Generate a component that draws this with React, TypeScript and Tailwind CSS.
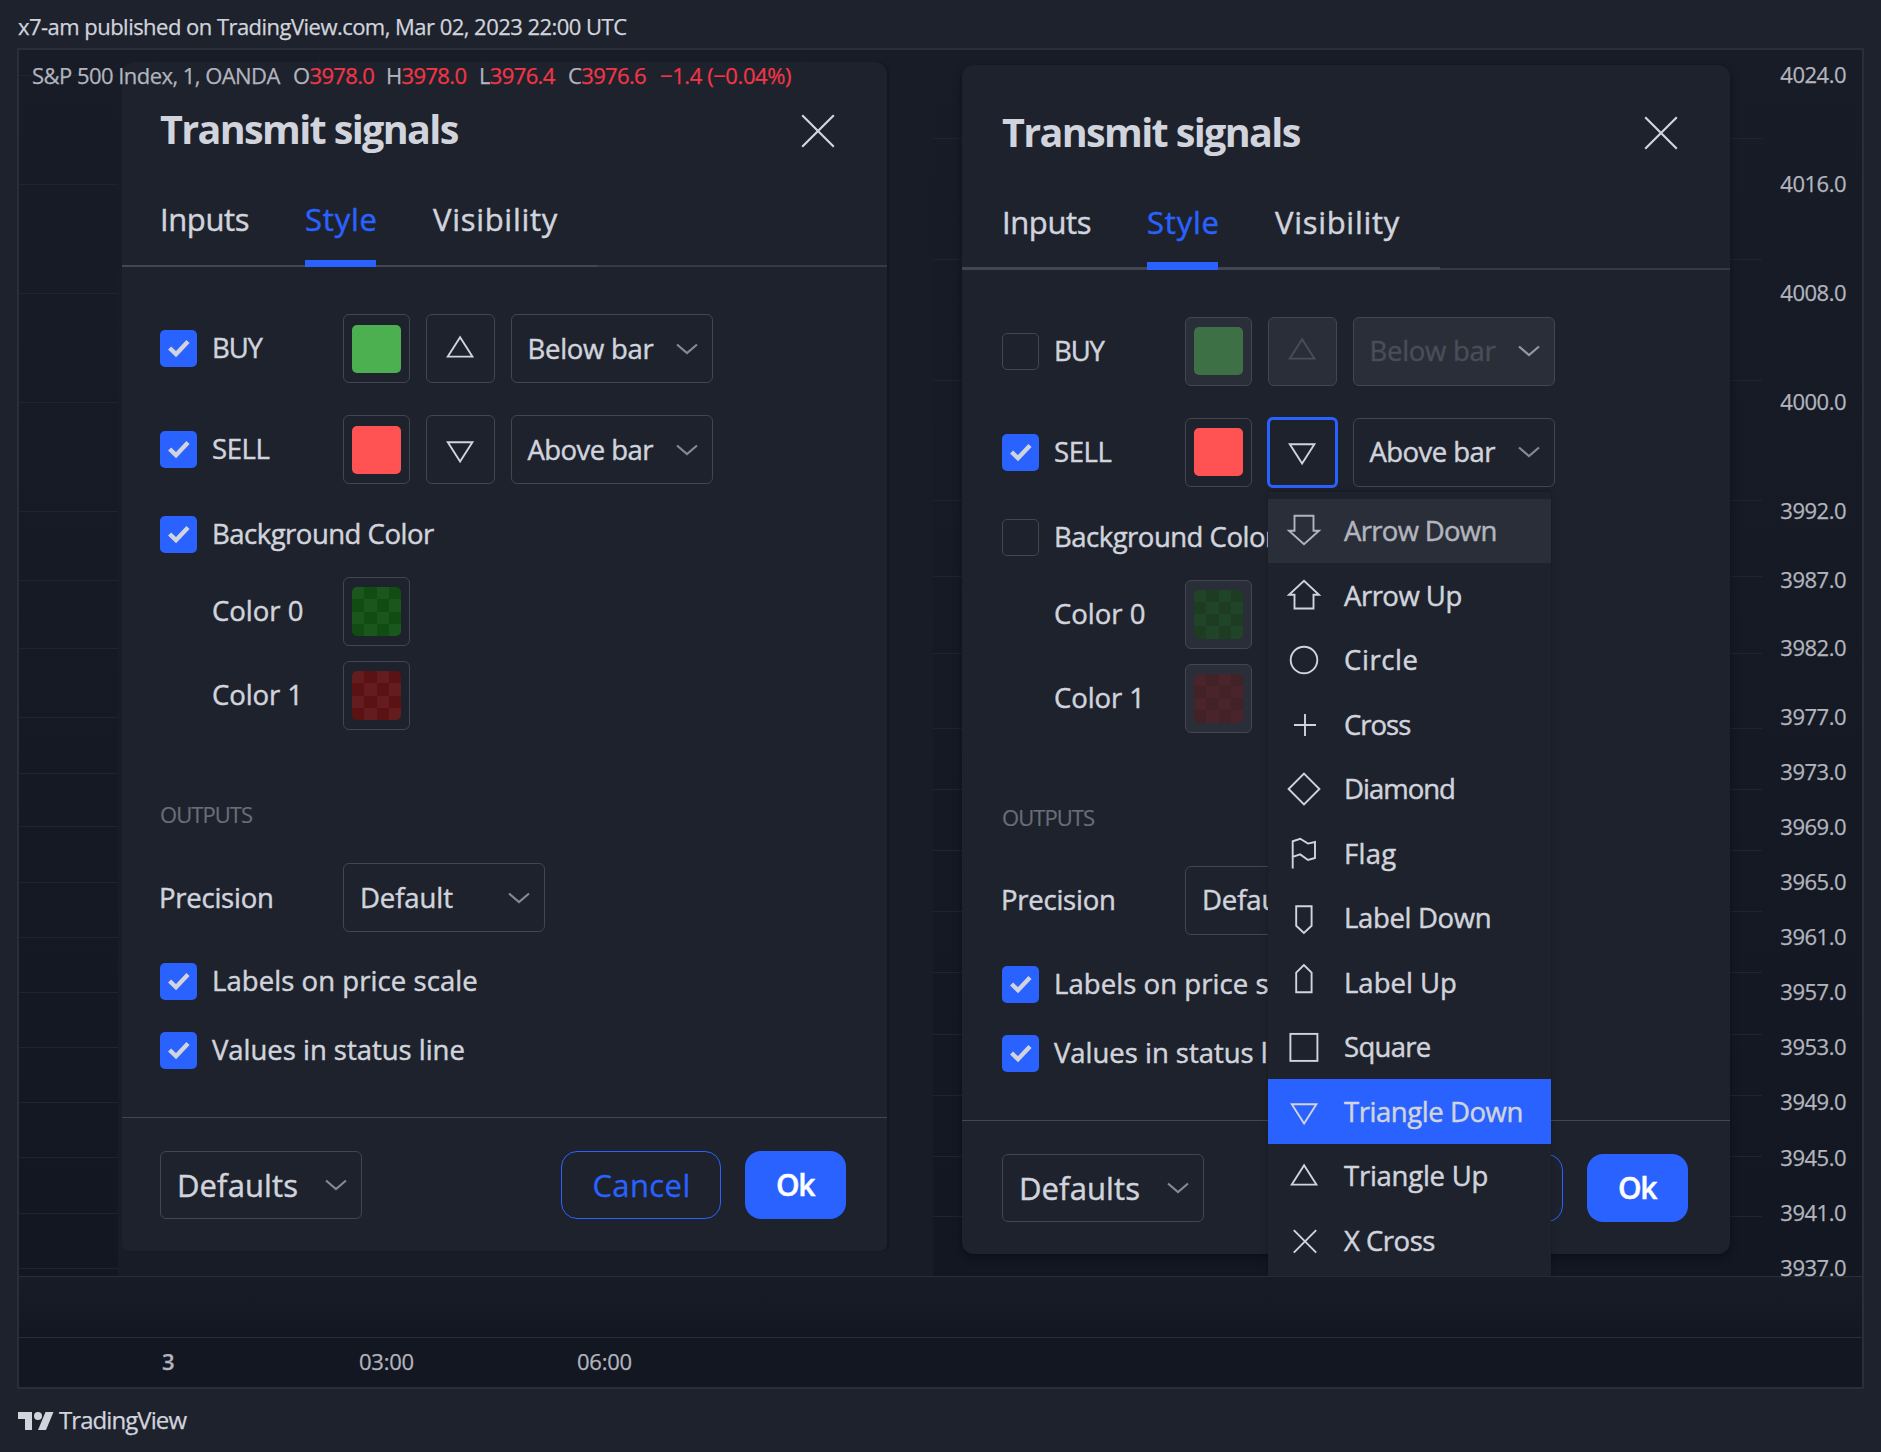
import type { ReactNode } from "react";

const SHAPES: Record<string, ReactNode> = {
  arrowDown: <path d="M8.5 2.8h19v15h5.5L18 31.2 3 17.8h5.5z" />,
  arrowUp: <path d="M8.5 31.5h19V17.8h5.5L18 3.8 3 17.8h5.5z" />,
  circle: <circle cx="18" cy="18" r="13.3" />,
  cross: <path d="M8 19h22M19 8v22" />,
  diamond: <path d="M18 2.6 33.4 18 18 33.4 2.6 18z" />,
  flag: <path d="M6.7 33.6V6.3L14.2 3.8 22 8.6l7-1.6v16L22 25l-7.8-5.6-7.5 2.4" />,
  labelDown: <path d="M10.2 6.2h15.4v19.6l-7.7 7.2-7.7-7.2z" />,
  labelUp: <path d="M10.2 28.3h15.4V8.6L17.9 1l-7.7 7.6z" />,
  square: <rect x="4.4" y="4.9" width="27" height="27" />,
  triangleDown: <path d="M5.8 11.2h24.6L18.1 30.6z" />,
  triangleUp: <path d="M5.8 26.6h24.6L18.1 7.2z" />,
  xCross: <path d="m7.8 8.2 22.4 22.4M30.2 8.2 7.8 30.6" />,
};

function ShapeIcon({ name, className = "" }: { name: string; className?: string }) {
  return (
    <svg
      viewBox="0 0 36 36"
      className={`h-9 w-9 shrink-0 fill-none stroke-current stroke-[1.9] ${className}`}
    >
      {SHAPES[name]}
    </svg>
  );
}

function Chevron({ className }: { className: string }) {
  return (
    <svg viewBox="0 0 22 12" className={`h-3 w-[22px] shrink-0 fill-none stroke-current stroke-[2.2] ${className}`}>
      <path d="m1 1.5 10 8.5 10-8.5" />
    </svg>
  );
}

function Checkbox({ checked }: { checked: boolean }) {
  if (!checked) {
    return <span className="h-[37px] w-[37px] shrink-0 rounded-[5px] border-[1.5px] border-[#434651]" />;
  }
  return (
    <span className="h-[37px] w-[37px] shrink-0 rounded-[5px] bg-[#2962ff]">
      <svg viewBox="0 0 37 37" className="h-full w-full fill-none stroke-[#d1d4dc] stroke-[4.4]">
        <path d="m9.6 18 6.4 6.2L28 11.4" />
      </svg>
    </span>
  );
}

function CheckRow({ checked, text, tracking }: { checked: boolean; text: string; tracking: string }) {
  return (
    <div className="flex h-[37px] items-center">
      <Checkbox checked={checked} />
      <span className={`mb-px ml-[15px] ${tracking}`}>{text}</span>
    </div>
  );
}

function Swatch({ color, disabled = false }: { color: string; disabled?: boolean }) {
  return (
    <span
      className={`flex h-[69px] w-[67px] shrink-0 items-center justify-center rounded-md border-[1.5px] border-[#434651] ${
        disabled ? "bg-[#2a2e39]" : ""
      }`}
    >
      <span className={`h-12 w-[49px] rounded-[5px] ${color}`} />
    </span>
  );
}

function CheckerSwatch({ light, dark, disabled = false }: { light: string; dark: string; disabled?: boolean }) {
  return (
    <span
      className={`flex h-[69px] w-[67px] shrink-0 items-center justify-center rounded-md border-[1.5px] border-[#434651] ${
        disabled ? "bg-[#2a2e39]" : ""
      }`}
    >
      <span className="grid h-[49px] w-[49px] grid-cols-4 grid-rows-4 overflow-hidden rounded-[5px]">
        {Array.from({ length: 16 }, (_, i) => (
          <span key={i} className={(i + Math.floor(i / 4)) % 2 === 0 ? light : dark} />
        ))}
      </span>
    </span>
  );
}

function Select({
  text,
  tracking,
  disabled = false,
  big = false,
}: {
  text: string;
  tracking: string;
  disabled?: boolean;
  big?: boolean;
}) {
  return (
    <div
      className={`flex w-[202px] shrink-0 items-center justify-between rounded-md border-[1.5px] border-[#434651] pr-[14px] pl-4 ${
        big ? "h-[68px] text-[31px]" : "h-[69px]"
      } ${disabled ? "bg-[#2a2e39] text-[#4a4d57]" : ""}`}
    >
      <span className={tracking}>{text}</span>
      <Chevron className={disabled ? "text-[#9598a1]" : "text-[#868993]"} />
    </div>
  );
}

function PlotRow({
  name,
  nameTracking,
  color,
  shape,
  location,
  locationTracking,
  checked,
  focused = false,
}: {
  name: string;
  nameTracking: string;
  color: string;
  shape: string;
  location: string;
  locationTracking: string;
  checked: boolean;
  focused?: boolean;
}) {
  const shapeBox = focused
    ? "-mr-px ml-[15px] h-[71px] w-[71px] border-[3px] border-[#2962ff]"
    : "ml-4 h-[69px] w-[69px] border-[1.5px] border-[#434651]";
  return (
    <div className="flex h-[69px] items-center">
      <div className="flex w-[183px] items-center">
        <Checkbox checked={checked} />
        <span className={`mb-px ml-[15px] ${nameTracking}`}>{name}</span>
      </div>
      <Swatch color={color} disabled={!checked} />
      <span
        className={`flex shrink-0 items-center justify-center rounded-md ${shapeBox} ${
          checked ? "" : "bg-[#2a2e39] text-[#4a4d57]"
        }`}
      >
        <ShapeIcon name={shape} className="mr-px mb-0.5" />
      </span>
      <div className="ml-[15.5px]">
        <Select text={location} tracking={locationTracking} disabled={!checked} />
      </div>
    </div>
  );
}

const MENU = [
  { icon: "arrowDown", text: "Arrow Down", tracking: "tracking-[-0.69px]", row: "bg-[#2a2e39] text-[#b2b5be]" },
  { icon: "arrowUp", text: "Arrow Up", tracking: "tracking-[-0.5px]", row: "" },
  { icon: "circle", text: "Circle", tracking: "tracking-[0.6px]", row: "" },
  { icon: "cross", text: "Cross", tracking: "tracking-[-1px]", row: "" },
  { icon: "diamond", text: "Diamond", tracking: "tracking-[-1px]", row: "" },
  { icon: "flag", text: "Flag", tracking: "tracking-[0.3px]", row: "" },
  { icon: "labelDown", text: "Label Down", tracking: "tracking-[-0.35px]", row: "" },
  { icon: "labelUp", text: "Label Up", tracking: "tracking-[0px]", row: "" },
  { icon: "square", text: "Square", tracking: "tracking-[-0.7px]", row: "" },
  { icon: "triangleDown", text: "Triangle Down", tracking: "tracking-[-0.44px]", row: "bg-[#2962ff]" },
  { icon: "triangleUp", text: "Triangle Up", tracking: "tracking-[-0.25px]", row: "" },
  { icon: "xCross", text: "X Cross", tracking: "tracking-[-0.5px]", row: "" },
];

function ShapeMenu() {
  return (
    <div className="absolute top-[427px] left-[306px] z-10 h-[784.5px] w-[283px] bg-[#1e222d] pt-[7px] shadow-[0_-1px_5px_rgba(0,0,0,0.3)]">
      {MENU.map((item) => (
        <div key={item.text} className={`flex h-[64.5px] items-center pl-[18px] ${item.row}`}>
          <ShapeIcon name={item.icon} />
          <span className={`mt-px ml-[22px] ${item.tracking}`}>{item.text}</span>
        </div>
      ))}
    </div>
  );
}

function Dialog({ variant }: { variant: "all" | "menu" }) {
  const menu = variant === "menu";
  return (
    <section
      className={`relative flex shrink-0 flex-col bg-[#1e222d] text-[27.5px] leading-[36px] [-webkit-text-stroke:0.45px] ${
        menu
          ? "mt-[14.5px] ml-[75px] w-[768px] rounded-xl shadow-[0_3px_8px_rgba(0,0,0,0.4)]"
          : "mt-3 ml-[103px] w-[765px] rounded-t-xl rounded-b-[7px] shadow-[2px_0_1px_#141720]"
      }`}
    >
      <header
        className={`flex h-[137px] items-center justify-between pr-[52.5px] ${menu ? "pl-10" : "pl-[38px]"}`}
      >
        <h2 className="mb-[3px] text-[39.5px] leading-[50px] font-bold tracking-[-1.65px] [-webkit-text-stroke:0px]">
          Transmit signals
        </h2>
        <svg viewBox="0 0 34 34" className="h-[34px] w-[34px] fill-none stroke-current stroke-[2.2]">
          <path d="m1.2 1.2 31.6 31.6M32.8 1.2 1.2 32.8" />
        </svg>
      </header>

      <nav className="relative h-[68px]">
        <div className="absolute bottom-0 left-0 w-full border-b-2 border-[#363a45]" />
        <div
          className={`absolute bottom-0 left-0 border-[#434651] ${menu ? "w-[478px] border-b-[3px]" : "w-[476px] border-b-2"}`}
        />
        <div className={`relative flex h-full text-[31px] leading-[40px] ${menu ? "pl-10" : "pl-[38px]"}`}>
          <span className="w-[145px] tracking-[-0.4px]">Inputs</span>
          <span className="flex w-[71px] flex-col justify-between whitespace-nowrap text-[#2962ff]">
            <span className="tracking-[0.8px]">Style</span>
            <span className="h-[7.5px] bg-[#2962ff]" />
          </span>
          <span className="ml-[57px] tracking-[0.7px]">Visibility</span>
        </div>
      </nav>

      <div className={`flex flex-col pt-[47px] ${menu ? "pl-10" : "pl-[38px]"}`}>
        <PlotRow
          name="BUY"
          nameTracking="tracking-[-1.1px]"
          color={menu ? "bg-[#3d7045]" : "bg-[#4caf50]"}
          shape="triangleUp"
          location="Below bar"
          locationTracking="tracking-[-0.28px]"
          checked={!menu}
        />
        <div className="mt-8">
          <PlotRow
            name="SELL"
            nameTracking="tracking-[-0.4px]"
            color="bg-[#ff5252]"
            shape="triangleDown"
            location="Above bar"
            locationTracking="tracking-[-0.55px]"
            checked
            focused={menu}
          />
        </div>
        <div className="mt-8">
          <CheckRow checked={!menu} text="Background Color" tracking="tracking-[-0.5px]" />
        </div>
        <div className="mt-6 flex h-[69px] items-center">
          <span className="mb-px w-[183px] pl-[52px]">Color 0</span>
          {menu ? (
            <CheckerSwatch light="bg-[#1f4427]" dark="bg-[#1d3c22]" disabled />
          ) : (
            <CheckerSwatch light="bg-[#19571d]" dark="bg-[#114c12]" />
          )}
        </div>
        <div className="mt-[15px] flex h-[69px] items-center">
          <span className="mb-px w-[183px] pl-[52px] tracking-[-0.1px]">Color 1</span>
          {menu ? (
            <CheckerSwatch light="bg-[#4a242b]" dark="bg-[#422127]" disabled />
          ) : (
            <CheckerSwatch light="bg-[#651c1f]" dark="bg-[#5a1212]" />
          )}
        </div>
        <h3 className="mt-[69px] mb-px h-[30px] text-[22px] leading-[30px] tracking-[-0.94px] text-[#6a6d78] [-webkit-text-stroke:0.2px]">
          OUTPUTS
        </h3>
        <div className="mt-[33px] flex h-[69px] items-center">
          <span className="-ml-px w-[184px] tracking-[-0.25px]">Precision</span>
          <Select text="Default" tracking="tracking-[-0.1px]" />
        </div>
        <div className="mt-[31px]">
          <CheckRow checked text="Labels on price scale" tracking="tracking-[0.07px]" />
        </div>
        <div className="mt-8">
          <CheckRow checked text="Values in status line" tracking="tracking-[-0.03px]" />
        </div>
      </div>

      <footer
        className={`mt-12 flex items-center border-t-[1.5px] border-[#434651] pt-[33px] pb-8 ${menu ? "pl-10" : "pl-[38px]"}`}
      >
        <Select text="Defaults" tracking="tracking-[0.1px]" big />
        <div className="ml-[199px] flex h-[68px] w-[160px] items-center justify-center rounded-2xl border-[1.5px] border-[#2962ff] text-[31px] tracking-[0.4px] text-[#2962ff] [-webkit-text-stroke:0.3px]">
          <span className="pl-px">Cancel</span>
        </div>
        <div className="ml-6 flex h-[68px] w-[101px] items-center justify-center rounded-2xl bg-[#2962ff] pr-px text-[30px] font-semibold tracking-[-1.5px] text-white">
          Ok
        </div>
      </footer>

      {menu && <ShapeMenu />}
    </section>
  );
}

const LEFT_GRID = [75, 184, 293, 402, 511, 580, 648, 717, 773, 826, 882, 937, 992, 1047, 1102, 1157, 1213, 1268];
const RIGHT_GRID = [138, 259, 380, 500, 576, 653, 728, 789, 850, 911, 972, 1034, 1095, 1156, 1216];
const TICKS = [157, 319, 481, 642, 805];

function ChartGrid() {
  return (
    <svg viewBox="19 50 1844 1226" className="absolute inset-0 h-[1226px] w-[1844px]" shapeRendering="crispEdges">
      <rect x="118" y="50" width="815" height="1226" fill="#181c27" />
      <g stroke="#20242f">
        {LEFT_GRID.map((y) => (
          <path key={y} d={`M19 ${y + 0.5}H118`} />
        ))}
        {RIGHT_GRID.map((y) => (
          <path key={y} d={`M933 ${y + 0.5}H1762`} />
        ))}
        {TICKS.map((x) => (
          <path key={x} d={`M${x + 0.5} 60V64`} />
        ))}
      </g>
    </svg>
  );
}

// Each price label with the height of its slot on the scale.
const PRICES: [string, number][] = [
  ["4024.0", 109],
  ["4016.0", 109],
  ["4008.0", 109],
  ["4000.0", 109],
  ["3992.0", 69],
  ["3987.0", 68],
  ["3982.0", 69],
  ["3977.0", 55],
  ["3973.0", 55],
  ["3969.0", 55],
  ["3965.0", 55],
  ["3961.0", 55],
  ["3957.0", 55],
  ["3953.0", 55],
  ["3949.0", 56],
  ["3945.0", 55],
  ["3941.0", 55],
  ["3937.0", 22],
];

function Quote({ label, value, width }: { label: string; value: string; width: string }) {
  return (
    <span className={`tracking-[-0.65px] ${width}`}>
      {label}
      <span className="text-[#f23645]">{value}</span>
    </span>
  );
}

export default function App() {
  return (
    <div className="flex h-[1452px] w-[1881px] flex-col overflow-hidden bg-[#1e222d] pl-[17px] font-['Open_Sans',sans-serif] text-[#d1d4dc] [-webkit-text-stroke:0.25px]">
      <header className="flex h-12 items-center pt-1 text-[22px] leading-[30px] tracking-[-0.53px]">
        <span className="pl-px">x7-am published on TradingView.com, Mar 02, 2023 22:00 UTC</span>
      </header>

      <main className="flex h-[1341px] w-[1847px] flex-col border-2 border-[#2a2e39]">
        <div className="relative flex h-[1226px] shrink-0 bg-linear-to-b from-[#181c27] to-[#131722]">
          <ChartGrid />
          <div className="absolute top-[10px] left-[13px] z-10 flex text-[22px] leading-[30px] whitespace-nowrap text-[#b2b5be]">
            <span className="w-[261px] tracking-[-0.54px]">S&amp;P 500 Index, 1, OANDA</span>
            <Quote label="O" value="3978.0" width="w-[93px]" />
            <Quote label="H" value="3978.0" width="w-[93px]" />
            <Quote label="L" value="3976.4" width="w-[89px]" />
            <Quote label="C" value="3976.6" width="w-[92px]" />
            <span className="tracking-[-0.42px] text-[#f23645]">−1.4 (−0.04%)</span>
          </div>
          <div className="flex items-start">
            <Dialog variant="all" />
            <Dialog variant="menu" />
          </div>
          <ul className="relative ml-auto flex flex-col pt-[9px] pr-4 text-right text-[22px] leading-[30px] tracking-[-0.5px] text-[#b2b5be]">
            {PRICES.map(([price, slot]) => (
              <li key={price} className="shrink-0" style={{ height: slot }}>
                {price}
              </li>
            ))}
          </ul>
        </div>
        <div className="h-[61px] shrink-0 border-t border-[#2a2e39] bg-linear-to-b from-[#181c27] to-[#131722]" />
        <div className="flex h-[50px] items-center border-t border-[#2a2e39] bg-[#131722] pb-[3px] text-[22px] leading-[30px] tracking-[-0.25px] text-[#b2b5be]">
          <span className="ml-[143px] w-3 text-center font-semibold">3</span>
          <span className="ml-[185px] w-[54px] text-center">03:00</span>
          <span className="ml-[164px] w-[54px] text-center">06:00</span>
        </div>
      </main>

      <footer className="flex h-[63px] items-center pl-px">
        <svg viewBox="0 4 36 18" className="h-[18px] w-9 fill-current">
          <path d="M14 22H7V11H0V4h14v18zM28 22h-8l7.5-18h8L28 22z" />
          <circle cx="20" cy="8" r="4" />
        </svg>
        <span className="-mt-0.5 ml-[5px] text-[24px] leading-[32px] tracking-[-0.93px]">TradingView</span>
      </footer>
    </div>
  );
}
